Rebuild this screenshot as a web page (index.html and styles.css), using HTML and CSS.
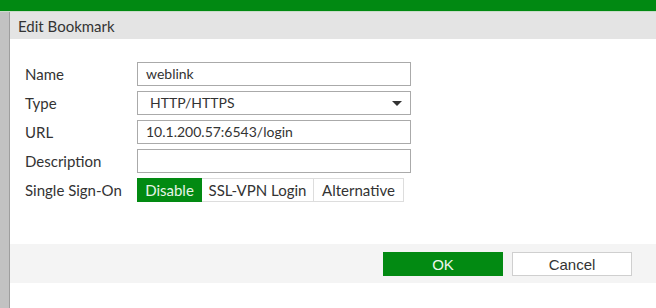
FILE: index.html
```html
<!DOCTYPE html>
<html lang="en">
<head>
    <meta charset="UTF-8">
    <title>Edit Bookmark</title>
    <link rel="stylesheet" href="styles.css">
</head>
<body>
    <div class="topbar"></div>
    <div class="frame">
        <div class="side-strip"></div>
        <div class="dialog">
            <header class="dialog-header">Edit Bookmark</header>
            <main class="dialog-body">
                <div class="form-row">
                    <label class="form-label">Name</label>
                    <div class="field">weblink</div>
                </div>
                <div class="form-row">
                    <label class="form-label">Type</label>
                    <div class="field field-select">
                        <span>HTTP/HTTPS</span>
                        <span class="caret"></span>
                    </div>
                </div>
                <div class="form-row">
                    <label class="form-label">URL</label>
                    <div class="field">10.1.200.57:6543/login</div>
                </div>
                <div class="form-row">
                    <label class="form-label">Description</label>
                    <div class="field"></div>
                </div>
                <div class="form-row">
                    <label class="form-label">Single Sign-On</label>
                    <div class="toggle-group">
                        <button class="toggle active">Disable</button>
                        <button class="toggle toggle-sso">SSL-VPN Login</button>
                        <button class="toggle toggle-alt">Alternative</button>
                    </div>
                </div>
            </main>
            <footer class="dialog-footer">
                <button class="btn btn-ok">OK</button>
                <button class="btn btn-cancel">Cancel</button>
            </footer>
        </div>
    </div>
</body>
</html>
```

FILE: styles.css
```css
* {
    margin: 0;
    padding: 0;
    box-sizing: border-box;
    font-family: "Lato", "Liberation Sans", sans-serif;
}

body {
    background: #fff;
    color: #333;
    width: 656px;
    height: 308px;
    overflow: hidden;
}

.topbar {
    height: 12px;
    background: #018912;
    border-bottom: 1px solid #c9dcc9;
}

.frame {
    display: flex;
    height: 296px;
}

.side-strip {
    width: 10px;
    background: #c2c2c2;
    border-right: 1px solid #9e9e9e;
}

.dialog {
    flex: 1;
    display: flex;
    flex-direction: column;
}

.dialog-header {
    height: 27px;
    background: #e4e4e4;
    font-size: 15px;
    line-height: 28px;
    padding-left: 8px;
    color: #333;
}

.dialog-body {
    height: 205px;
    padding: 23px 0 0 15px;
    display: flex;
    flex-direction: column;
    gap: 5px;
}

.form-row {
    display: flex;
    align-items: center;
    height: 24px;
}

.form-label {
    width: 112px;
    font-size: 15px;
    color: #333;
}

.field {
    width: 274px;
    height: 24px;
    border: 1px solid #aaa;
    font-size: 14px;
    line-height: 22px;
    padding-left: 8px;
    color: #333;
}

.field-select {
    display: flex;
    justify-content: space-between;
    align-items: center;
    padding-left: 12px;
    padding-right: 8px;
}

.caret {
    width: 0;
    height: 0;
    border-left: 5px solid transparent;
    border-right: 5px solid transparent;
    border-top: 5px solid #333;
}

.toggle-group {
    display: flex;
    height: 24px;
}

.toggle {
    height: 24px;
    border: 1px solid #ddd;
    border-left: none;
    background: #fff;
    color: #333;
    font-size: 15px;
    padding: 0;
    text-align: center;
}

.toggle:first-child {
    border-left: 1px solid #ddd;
}

.toggle.active {
    background: #028a12;
    border-color: #028a12;
    color: #e8f5e8;
    width: 65px;
}

.toggle-sso {
    width: 112px;
}

.toggle-alt {
    width: 90px;
}

.dialog-footer {
    height: 39px;
    background: #f4f4f4;
    display: flex;
    justify-content: flex-end;
    align-items: flex-start;
    gap: 9px;
    padding: 8px 24px 0 0;
}

.btn {
    width: 120px;
    height: 24px;
    font-family: "Liberation Sans", sans-serif;
    font-size: 15px;
    cursor: pointer;
}

.btn-ok {
    background: #028a12;
    border: 1px solid #028a12;
    color: #eef7ee;
}

.btn-cancel {
    background: #fff;
    border: 1px solid #cfcfcf;
    color: #333;
}
```
